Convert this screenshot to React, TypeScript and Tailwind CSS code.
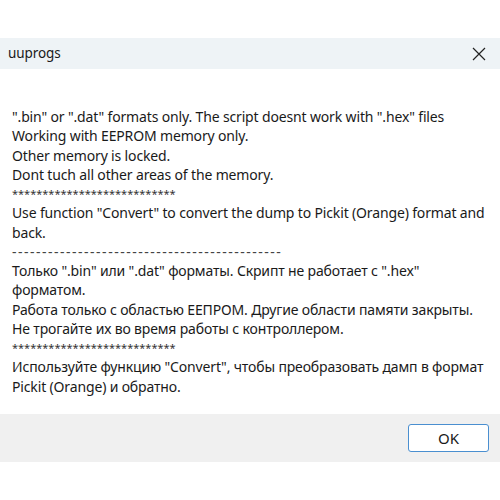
import React from "react";

type L = { t: string; k?: "star" | "dash" };

const lines: L[] = [
  { t: '".bin" or ".dat" formats only. The script doesnt work with ".hex" files' },
  { t: "Working with EEPROM memory only." },
  { t: "Other memory is locked." },
  { t: "Dont tuch all other areas of the memory." },
  { t: "***************************", k: "star" },
  { t: 'Use function "Convert" to convert the dump to Pickit (Orange) format and' },
  { t: "back." },
  { t: "---------------------------------------------", k: "dash" },
  { t: 'Только ".bin" или ".dat" форматы. Скрипт не работает с ".hex"' },
  { t: "форматом." },
  { t: "Работа только с областью ЕЕПРОМ. Другие области памяти закрыты." },
  { t: "Не трогайте их во время работы с контроллером." },
  { t: "***************************", k: "star" },
  { t: 'Используйте функцию "Convert", чтобы преобразовать дамп в формат' },
  { t: "Pickit (Orange) и обратно." },
];

export default function App() {
  return (
    <div
      className="w-[500px] h-[500px] bg-white flex flex-col text-[#1a1a1a]"
      style={{ fontFamily: '"Noto Sans", "Open Sans", sans-serif' }}
    >
      <div className="h-[38px]" />
      <div className="h-[31px] bg-[#eef3f6] flex items-center justify-between pl-[8px] pr-[14px]">
        <span className="text-[13.5px] tracking-[-0.1px] text-[#1a1a1a]">uuprogs</span>
        <svg width="14" height="14" viewBox="0 0 14 14" className="text-[#222]">
          <path d="M1 1 L13 13 M13 1 L1 13" stroke="currentColor" strokeWidth="1.2" fill="none" />
        </svg>
      </div>
      <div className="h-[345px] bg-white pt-[38px] pl-[12px]">
        {lines.map((l, i) =>
          l.k === "star" ? (
            <div key={i} className="h-[19.25px] text-[11px] leading-[19.25px] whitespace-nowrap tracking-[0px] text-[#333]">
              {l.t}
            </div>
          ) : l.k === "dash" ? (
            <div key={i} className="h-[19.25px] text-[14px] leading-[19.25px] whitespace-nowrap tracking-[1.5px] text-[#444]">
              {l.t}
            </div>
          ) : (
            <div key={i} className="text-[14px] leading-[19.25px] whitespace-nowrap tracking-[-0.15px]">
              {l.t}
            </div>
          )
        )}
      </div>
      <div className="h-[48px] bg-[#f0f0f0] flex items-center justify-end pr-[11px]">
        <button className="w-[81px] h-[28px] bg-white border border-[#4a8fd0] rounded-[3px] text-[15px] text-[#1a1a1a] flex items-center justify-center">
          OK
        </button>
      </div>
      <div className="flex-1 bg-white" />
    </div>
  );
}
